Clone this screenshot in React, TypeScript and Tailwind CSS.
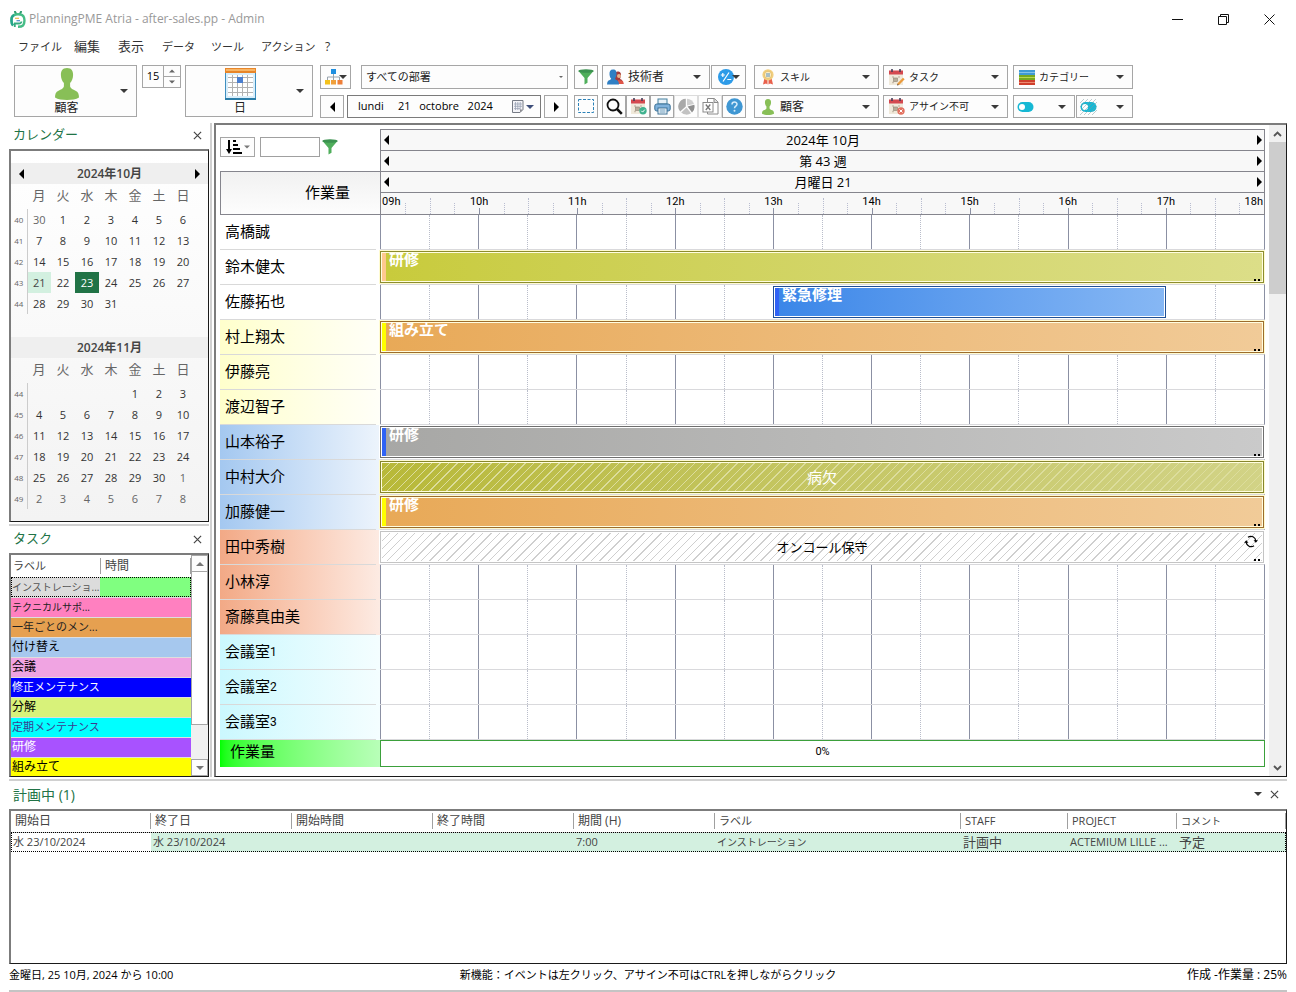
import React from "react";
import type { ReactNode } from "react";

/* ---------- small glyphs ---------- */

function Caret({ className = "w-2 text-[#3a3a3a]" }: { className?: string }) {
  return (
    <svg viewBox="0 0 8 4" className={`h-1 shrink-0 ${className}`} fill="currentColor" aria-hidden="true">
      <path d="M0 0h8L4 4z" />
    </svg>
  );
}

function Arrow({ dir }: { dir: "left" | "right" }) {
  return (
    <svg viewBox="0 0 5 10" width="5" height="10" aria-hidden="true">
      <path d={dir === "left" ? "M5 0v10L0 5z" : "M0 0v10l5-5z"} fill="#000" />
    </svg>
  );
}

function CloseIcon() {
  return (
    <svg viewBox="0 0 10 10" width="9" height="9" aria-hidden="true">
      <path d="M1 1l8 8M9 1L1 9" stroke="#444" strokeWidth="1.3" />
    </svg>
  );
}

function LogoIcon() {
  return (
    <svg viewBox="0 0 16 17" width="16" height="17" aria-hidden="true">
      <path d="M5 .8l1 2M11 .8l-1 2" stroke="#2f9b6f" strokeWidth="2" strokeLinecap="round" />
      <path d="M3 14.500Q.8 12 1.800 6.500 3 3.200 8 3.200t6 3.300q1.300 5-1 8-1.500 1.300-5 1.300" stroke="#46bd86" strokeWidth="2.400" fill="none" />
      <path d="M3 14.500Q.8 12 1.800 6.500 2.300 5 4 4" stroke="#27a58c" strokeWidth="2.400" fill="none" />
      <path d="M4.800 16V12.500h4q2.500 0 2.700-2" stroke="#35ad80" strokeWidth="1.800" fill="none" />
      <path d="M5 7.300h4" stroke="#e8b84a" strokeWidth="1.200" />
      <path d="M6.500 9.700h3.500" stroke="#4f86c9" strokeWidth="1.200" />
    </svg>
  );
}

function PersonIcon({ className }: { className: string }) {
  return (
    <svg viewBox="0 0 24 32" className={className} fill="#88bf57" aria-hidden="true">
      <path d="M12 0C7.500 0 5.800 2.800 5.900 7c.1 3.500 1.200 6 3 8v3.500C8.500 20.500 6 21.500 3.500 22.700.8 24 0 26 0 29.500 3 31.300 7 32 12 32s9-.7 12-2.500c0-3.500-.8-5.500-3.500-6.800-2.500-1.200-5-2.200-5.400-4.200V15c1.800-2 2.900-4.500 3-8C18.200 2.800 16.500 0 12 0z" />
    </svg>
  );
}

function CalendarBigIcon() {
  return (
    <svg viewBox="0 0 31 32" width="31" height="32" aria-hidden="true">
      <rect x="0.500" y="0.500" width="30" height="30.500" rx="1" fill="#d9eefb" stroke="#3f8fc0" />
      <rect x="0" y="0" width="31" height="5" fill="#e8862a" />
      <rect x="1" y="1" width="29" height="2" fill="#f7b566" />
      <rect x="3" y="7" width="25" height="21" fill="#fff" />
      <path d="M7.500 7v21M12.500 7v21M17.500 7v21M22.500 7v21M3 9.500h25M3 14.500h25M3 19.500h25M3 24.500h25" stroke="#b2b2b2" />
      <rect x="12" y="9" width="6" height="6" fill="#4a7fd0" />
      <path d="M0 31h31" stroke="#2b7da8" strokeWidth="2" />
    </svg>
  );
}

function OrgIcon() {
  return (
    <svg viewBox="0 0 18 16" width="18" height="16" aria-hidden="true">
      <path d="M8.500 4v7M2.500 11V8h12v3" stroke="#9aa4ae" fill="none" />
      <rect x="6" y="0" width="5" height="5" fill="#1f8fe0" />
      <rect x="0" y="11" width="5" height="4.500" fill="#f3c11b" />
      <rect x="6" y="11" width="5" height="4.500" fill="#f0a03a" />
      <rect x="12.500" y="11" width="5" height="4.500" fill="#ee7f38" />
    </svg>
  );
}

function FunnelIcon() {
  return (
    <svg viewBox="0 0 16 16" width="16" height="16" aria-hidden="true">
      <path d="M0.500 2L6.500 9v6.500l3-1.800V9l6-7z" fill="#4fae5b" />
      <ellipse cx="8" cy="2" rx="7.700" ry="1.800" fill="#3c9250" />
    </svg>
  );
}

function TechIcon() {
  return (
    <svg viewBox="0 0 17 16" width="17" height="16" aria-hidden="true">
      <path d="M8 4q1-2 3.500-1.500Q14.500 3 14 7l-1 3q3 .8 3.500 5H8z" fill="#a83a3a" />
      <path d="M10 15l1-4 5 1 .5 3z" fill="#df5548" />
      <circle cx="12" cy="7" r="2" fill="#e8b48c" />
      <path d="M6 0.500c3 0 3.800 2 3.500 5C9.300 7.500 8.600 9 8 9.600q.5 1.400 2.500 2Q12 12.500 12 15.500H0q0-3 1.500-3.900Q4 11 4.200 9.600C3.200 8.800 2.700 7.500 2.500 5.500 2.300 2.500 3.200.5 6 .5z" fill="#2f7fc4" />
    </svg>
  );
}

function PlusMinusIcon() {
  return (
    <svg viewBox="0 0 16 16" width="16" height="16" aria-hidden="true">
      <circle cx="8" cy="8" r="8" fill="#2d9be8" />
      <path d="M11 3.500l-6 9M2.800 6h4M4.800 4v4M9.300 10.500h4" stroke="#fff" strokeWidth="1.200" />
    </svg>
  );
}

function DropCalendarIcon() {
  return (
    <svg viewBox="0 0 12 13" width="12" height="13" aria-hidden="true">
      <path d="M.5.500h10.500v9l-3 3H.5z" fill="#f4f4f8" stroke="#777c86" />
      <path d="M3.500 2v8M5.800 2v8M8.200 2v8M2 4h8M2 6.300h8M2 8.600h6" stroke="#9ba3b5" strokeWidth=".8" />
      <path d="M11 9.500H8v3z" fill="#8b8b91" />
    </svg>
  );
}

function SelectionIcon() {
  return (
    <svg viewBox="0 0 17 15" width="17" height="15" aria-hidden="true">
      <rect x="0.500" y="0.500" width="15" height="13" fill="none" stroke="#2c82b8" strokeDasharray="3 1.500" />
    </svg>
  );
}

function SearchIcon() {
  return (
    <svg viewBox="0 0 17 17" width="17" height="17" aria-hidden="true">
      <circle cx="7" cy="7" r="5.500" fill="#fff" stroke="#111" strokeWidth="1.800" />
      <path d="M11 11l4.800 4.800" stroke="#111" strokeWidth="2.500" />
    </svg>
  );
}

function EventIcon({ badge }: { badge: "check" | "pencil" | "cross" }) {
  return (
    <svg viewBox="0 0 17 17" width="17" height="17" aria-hidden="true">
      <rect x="1" y="4" width="14" height="12" fill="#f0e9da" />
      <rect x="1" y="1.500" width="14" height="4" fill="#d4494f" />
      <path d="M4 0v3M12 0v3" stroke="#463f58" strokeWidth="1.600" />
      <path d="M4 8h2M10 8h2M4 13.500h2" stroke="#cbbfae" strokeWidth="1.500" />
      <rect x="5.500" y="9" width="4" height="3.500" fill="#b8ae9a" stroke="#8e8474" strokeWidth=".6" />
      {badge === "check" && (
        <g>
          <circle cx="13" cy="12.800" r="3.700" fill="#3fb28f" />
          <path d="M11.300 12.800l1.300 1.300 2.200-2.500" stroke="#fff" fill="none" />
        </g>
      )}
      {badge === "pencil" && (
        <g>
          <path d="M10 15.500l5.800-6" stroke="#ea9a3c" strokeWidth="2.400" />
          <path d="M9 16.500l1.800-.6-1.200-1.200z" fill="#553c2c" />
        </g>
      )}
      {badge === "cross" && (
        <g>
          <circle cx="13" cy="13" r="3.700" fill="#e2705f" />
          <path d="M11.500 11.500l3 3M14.500 11.500l-3 3" stroke="#fff" />
        </g>
      )}
    </svg>
  );
}

function PrinterIcon() {
  return (
    <svg viewBox="0 0 17 17" width="17" height="17" aria-hidden="true">
      <rect x="4" y="1" width="9" height="5" fill="#e7f1f8" stroke="#44809f" />
      <rect x="0.800" y="6" width="15.400" height="7" rx="2" fill="#7fb2dc" stroke="#3a7096" />
      <rect x="4" y="10" width="9" height="6" fill="#fff" stroke="#3a7096" />
      <path d="M5.500 12h6M5.500 14h6" stroke="#5d93b8" />
    </svg>
  );
}

function PieIcon() {
  return (
    <svg viewBox="0 0 17 17" width="17" height="17" aria-hidden="true">
      <path d="M7.800 8.500V.8A7.700 7.700 0 0 0 2.200 13.600z" fill="#a9a9a9" />
      <path d="M9 7.500V.8a7.700 7.700 0 0 1 7 5.200z" fill="#cfcfcf" />
      <path d="M9.600 8.600l6.700-1.800a7.700 7.700 0 0 1-2.300 7.600z" fill="#8f8f8f" />
      <path d="M8.500 9.500l4.500 5.700a7.700 7.700 0 0 1-9.800-.7z" fill="#c2c2c2" />
    </svg>
  );
}

function ExcelIcon() {
  return (
    <svg viewBox="0 0 17 17" width="17" height="17" aria-hidden="true">
      <path d="M5.500 4.500v-4h7l3.500 3.500v12H5.500v-2" fill="#fff" stroke="#8a8a8a" />
      <path d="M12 .5v4h4" fill="#ddd" stroke="#8a8a8a" />
      <rect x="1" y="4.500" width="10" height="9.500" fill="#fff" stroke="#8a8a8a" />
      <path d="M3.800 6.500l4.500 5.500M8.300 6.500L3.800 12" stroke="#777" strokeWidth="1.300" />
    </svg>
  );
}

function HelpIcon() {
  return (
    <svg viewBox="0 0 17 17" width="17" height="17" aria-hidden="true">
      <circle cx="8.500" cy="8.500" r="8.200" fill="#3f97d3" />
      <path d="M6 6.500C6 3.200 11 3.300 11 6.200c0 1.900-2.500 1.800-2.500 4" stroke="#d5ecfb" strokeWidth="1.500" fill="none" />
      <circle cx="8.500" cy="12.700" r="1" fill="#d5ecfb" />
    </svg>
  );
}

function MedalIcon() {
  return (
    <svg viewBox="0 0 14 16" width="14" height="16" aria-hidden="true">
      <path d="M3.500 9L2 15.500l3-1 1.500 1V10zM10.500 9l1.500 6.500-3-1-1.500 1V10z" fill="#e8604c" />
      <circle cx="7" cy="5.800" r="5.600" fill="#f2cf7e" />
      <circle cx="7" cy="5.800" r="3.600" fill="#fbeec6" stroke="#d9ac50" strokeWidth=".6" />
      <path d="M5 5h4M5 7h4" stroke="#5a8fc0" strokeWidth="1.200" />
    </svg>
  );
}

function CategoryIcon() {
  return (
    <svg viewBox="0 0 16 15" width="16" height="15" aria-hidden="true">
      <rect width="16" height="5" y="0" fill="#3f9ad4" />
      <rect width="16" height="1" y="2" fill="#83c3ea" />
      <rect width="16" height="5" y="5" fill="#76a821" />
      <rect width="16" height="1" y="7" fill="#b8d94b" />
      <rect width="16" height="5" y="10" fill="#cf3f2c" />
      <rect width="16" height="1" y="12" fill="#ec8a72" />
    </svg>
  );
}

function ToggleIcon({ hatched = false }: { hatched?: boolean }) {
  return (
    <svg viewBox="0 0 17 16" width="17" height="16" aria-hidden="true">
      <rect x="0.500" y="3" width="16" height="10" rx="5" fill="#16b8d4" />
      <circle cx="5" cy="8" r="3" fill="#fff" />
      {hatched && (
        <path
          d="M0 4L4 0M0 8L8 0M0 12L12 0M0 16L16 0M4 16L17 3M8 16l9-9M12 16l5-5"
          stroke="#7d9ba0"
          strokeWidth=".5"
        />
      )}
    </svg>
  );
}

function SortIcon() {
  return (
    <svg viewBox="0 0 16 14" width="16" height="14" aria-hidden="true">
      <path d="M3 0v11" stroke="#000" strokeWidth="2" />
      <path d="M0 9h6l-3 5z" />
      <path d="M7 1h3M7 5h5M7 9h7M7 13h9" stroke="#000" strokeWidth="2" />
    </svg>
  );
}

function RepeatIcon() {
  return (
    <svg viewBox="0 0 14 13" width="14" height="13" aria-hidden="true">
      <path d="M11.800 6A4.900 4.900 0 0 0 4 2.300M2.200 7A4.900 4.900 0 0 0 10 10.700" stroke="#000" strokeWidth="1.200" fill="none" />
      <path d="M9.500 5.200h4.500l-2.200 2.600zM0 7.800h4.500L2.300 5.200z" />
    </svg>
  );
}

/* ---------- toolbar ---------- */

const BOX = "border border-[#a6a6a6] bg-[#fdfdfd]";

function IconButton({ label, children, className = "w-6", muted = false }: { label: string; children: ReactNode; className?: string; muted?: boolean }) {
  return (
    <button
      type="button"
      aria-label={label}
      className={`flex shrink-0 items-center justify-center border bg-[#fdfdfd] ${muted ? "border-[#dcdcdc]" : "border-[#a6a6a6]"} ${className}`}
    >
      {children}
    </button>
  );
}

function Combo({ label, icon, text, className = "", flat = false }: { label: string; icon?: ReactNode; text: string; className?: string; flat?: boolean }) {
  return (
    <div className={`flex items-center gap-1 pl-1 ${BOX} ${flat ? "pr-1" : "pr-2"} ${className}`}>
      {icon && <span className="flex w-[17px] shrink-0 justify-center">{icon}</span>}
      <select aria-label={label} className="min-w-0 flex-1 appearance-none truncate bg-transparent text-[#222] outline-none">
        <option>{text}</option>
      </select>
      <Caret className={flat ? "w-1 text-[#666]" : "w-2 text-[#3a3a3a]"} />
    </div>
  );
}

function BigButton({ icon, text, className }: { icon: ReactNode; text: string; className: string }) {
  return (
    <button type="button" className={`flex h-[52px] shrink-0 items-center pr-2 ${BOX} ${className}`}>
      <span className="flex flex-1 flex-col items-center pt-0.5 pr-0.5 text-[12px] leading-4 text-[#222]">
        {icon}
        <span>{text}</span>
      </span>
      <Caret />
    </button>
  );
}

function Toolbar() {
  return (
    <div className="flex items-start pl-[14px]">
      <BigButton text="顧客" className="w-[123px]" icon={<PersonIcon className="h-8 w-6" />} />
      <div className={`mr-1 ml-[5px] flex h-[23px] w-[39px] shrink-0 ${BOX}`}>
        <input aria-label="間隔" defaultValue="15" className="w-5 min-w-0 text-center text-[11px] text-black outline-none" />
        <div className="flex flex-1 flex-col border-l border-[#a6a6a6]">
          <button type="button" aria-label="増やす" className="flex flex-1 items-center justify-center border-b border-[#a6a6a6]">
            <span className="rotate-180"><Caret className="w-1.5 text-[#666]" /></span>
          </button>
          <button type="button" aria-label="減らす" className="flex flex-1 items-center justify-center">
            <Caret className="w-1.5 text-[#666]" />
          </button>
        </div>
      </div>
      <BigButton text="日" className="w-[128px]" icon={<CalendarBigIcon />} />

      <div className="ml-[7px] flex w-[248px] shrink-0 flex-col gap-[6px]">
        <div className="flex h-6 gap-[10px]">
          <IconButton label="組織" className="w-[31px]">
            <OrgIcon />
            <Caret className="-ml-1 w-2 text-[#3a3a3a]" />
          </IconButton>
          <Combo label="部署" text="すべての部署" flat className="flex-1 text-[11px]" />
        </div>
        <div className="flex h-[23px] gap-[3px]">
          <IconButton label="前の日"><Arrow dir="left" /></IconButton>
          <div className="flex min-w-0 flex-1 items-center border border-[#7a7a7a] bg-[#fdfdfd] pr-1.5 pl-[10px]">
            <input
              aria-label="日付"
              defaultValue={"lundi     21   octobre   2024"}
              className="min-w-0 flex-1 text-[11px] text-black outline-none"
            />
            <button type="button" aria-label="日付を選択" className="flex items-center gap-0.5">
              <DropCalendarIcon />
              <Caret className="w-2 text-[#3f4f7a]" />
            </button>
          </div>
          <IconButton label="次の日"><Arrow dir="right" /></IconButton>
        </div>
      </div>

      <div className="ml-[6px] flex w-[172px] shrink-0 flex-col gap-[6px]">
        <div className="flex h-6">
          <IconButton label="フィルター"><FunnelIcon /></IconButton>
          <Combo label="リソース" text="技術者" icon={<TechIcon />} className="mr-px ml-1 flex-1 text-[12px]" />
          <IconButton label="計算" className="w-[35px]">
            <PlusMinusIcon />
            <Caret className="-ml-0.5 w-2 text-[#3a3a3a]" />
          </IconButton>
        </div>
        <div className="flex h-[23px]">
          <IconButton label="選択" className="mr-1 w-6"><SelectionIcon /></IconButton>
          <IconButton label="検索"><SearchIcon /></IconButton>
          <IconButton label="予定"><EventIcon badge="check" /></IconButton>
          <IconButton label="印刷"><PrinterIcon /></IconButton>
          <IconButton label="統計" muted><PieIcon /></IconButton>
          <IconButton label="エクスポート" muted><ExcelIcon /></IconButton>
          <IconButton label="ヘルプ"><HelpIcon /></IconButton>
        </div>
      </div>

      <div className="ml-2 flex w-[125px] shrink-0 flex-col gap-[6px]">
        <Combo label="スキル" text="スキル" icon={<MedalIcon />} className="h-6 text-[10px]" />
        <Combo label="顧客" text="顧客" icon={<PersonIcon className="h-4 w-3" />} className="h-[23px] text-[12px]" />
      </div>
      <div className="ml-1 flex w-[125px] shrink-0 flex-col gap-[6px]">
        <Combo label="タスク" text="タスク" icon={<EventIcon badge="pencil" />} className="h-6 text-[10px]" />
        <Combo label="アサイン不可" text="アサイン不可" icon={<EventIcon badge="cross" />} className="h-[23px] text-[10px]" />
      </div>
      <div className="ml-[5px] flex w-[120px] shrink-0 flex-col gap-[6px]">
        <Combo label="カテゴリー" text="カテゴリー" icon={<CategoryIcon />} className="h-6 text-[10px]" />
        <div className="flex h-[23px] gap-px">
          <button type="button" aria-label="表示切替" className={`flex w-[62px] items-center justify-between pr-2 pl-[3px] ${BOX}`}>
            <ToggleIcon />
            <Caret />
          </button>
          <button type="button" aria-label="アサイン不可の表示切替" className={`flex flex-1 items-center justify-between pr-2 pl-[3px] ${BOX}`}>
            <ToggleIcon hatched />
            <Caret />
          </button>
        </div>
      </div>
    </div>
  );
}

/* ---------- left dock ---------- */

const PANEL = "border-t-2 border-l-2 border-r border-b border-t-[#7c7c7c] border-l-[#7c7c7c] border-r-[#1a1a1a] border-b-[#1a1a1a]";

function PanelTitle({ title, size }: { title: string; size: string }) {
  return (
    <div className="flex h-[26px] items-center justify-between pr-[7px] pb-0.5 pl-1">
      <h2 className={`text-[#217346] ${size}`}>{title}</h2>
      <button type="button" aria-label={`${title}を閉じる`}><CloseIcon /></button>
    </div>
  );
}

type Month = { title: string; weeks: [number, (number | null)[]][]; nav?: boolean; outside: (week: number, day: number) => boolean };

const MONTHS: Month[] = [
  {
    title: "2024年10月",
    nav: true,
    outside: (w, d) => w === 40 && d === 30,
    weeks: [
      [40, [30, 1, 2, 3, 4, 5, 6]],
      [41, [7, 8, 9, 10, 11, 12, 13]],
      [42, [14, 15, 16, 17, 18, 19, 20]],
      [43, [21, 22, 23, 24, 25, 26, 27]],
      [44, [28, 29, 30, 31, null, null, null]],
    ],
  },
  {
    title: "2024年11月",
    outside: (w, d) => w === 49 || (w === 48 && d === 1),
    weeks: [
      [44, [null, null, null, null, 1, 2, 3]],
      [45, [4, 5, 6, 7, 8, 9, 10]],
      [46, [11, 12, 13, 14, 15, 16, 17]],
      [47, [18, 19, 20, 21, 22, 23, 24]],
      [48, [25, 26, 27, 28, 29, 30, 1]],
      [49, [2, 3, 4, 5, 6, 7, 8]],
    ],
  },
];

function dayTone(month: Month, week: number, day: number | null) {
  if (month.nav && day === 23) return "bg-[#217346] text-white";
  if (month.nav && day === 21) return "bg-[#d3f0e0] text-[#444]";
  if (day !== null && month.outside(week, day)) return "text-[#666]";
  return "text-[#333]";
}

function MonthView({ month }: { month: Month }) {
  return (
    <div className="min-h-[174px]">
      <div className="flex h-[21px] items-center justify-between bg-[#efefef] px-2">
        {month.nav ? <button type="button" aria-label="前の月"><Arrow dir="left" /></button> : <span />}
        <span className="text-[12px] font-semibold text-[#444]">{month.title}</span>
        {month.nav ? <button type="button" aria-label="次の月"><Arrow dir="right" /></button> : <span />}
      </div>
      <table className="table-fixed border-collapse text-center">
        <thead>
          <tr className="h-[25px] text-[13px] text-[#666]">
            <th className="w-4" aria-label="週" />
            {["月", "火", "水", "木", "金", "土", "日"].map((d) => (
              <th key={d} className="w-6 p-0 pb-1 leading-4 font-normal">{d}</th>
            ))}
          </tr>
        </thead>
        <tbody>
          {month.weeks.map(([week, days]) => (
            <tr key={week} className="h-[21px]">
              <th className="border-r border-[#ccc] p-0 text-[8px] leading-3 font-normal text-[#666]">{week}</th>
              {days.map((day, i) => (
                <td key={i} className={`p-0 text-[11px] leading-4 ${dayTone(month, week, day)}`}>{day}</td>
              ))}
            </tr>
          ))}
        </tbody>
      </table>
    </div>
  );
}

const TASKS = [
  { label: "インストレーショ...", tone: "bg-[#80ff80] text-[#555] text-[10px]" },
  { label: "テクニカルサポ...", tone: "bg-[#ff80c0] text-[#222] text-[10px]" },
  { label: "一年ごとのメン...", tone: "bg-[#e6a050] text-[#222] text-[11px]" },
  { label: "付け替え", tone: "bg-[#a6c8ee] text-black text-[12px]" },
  { label: "会議", tone: "bg-[#f0a4e2] text-black text-[12px]" },
  { label: "修正メンテナンス", tone: "bg-[#0000ff] text-white text-[11px]" },
  { label: "分解", tone: "bg-[#d8f27a] text-black text-[12px]" },
  { label: "定期メンテナンス", tone: "bg-[#00ffff] text-[#3b3b8f] text-[11px]" },
  { label: "研修", tone: "bg-[#a852ff] text-white text-[12px]" },
  { label: "組み立て", tone: "bg-[#ffff00] text-black text-[12px]" },
];

function TaskList() {
  return (
    <div className={`flex h-[224px] overflow-hidden ${PANEL}`}>
      <table className="flex-1 table-fixed border-collapse">
        <thead>
          <tr className="h-[22px] text-left text-[#444]">
            <th className="w-[89px] p-0 pl-0.5 text-[11px] leading-4 font-normal">ラベル</th>
            <th className="p-0 font-normal">
              <div className="border-x border-[#a0a0a0] pl-1 text-[12px] leading-4">時間</div>
            </th>
          </tr>
        </thead>
        <tbody>
          {TASKS.map((task, i) => (
            <tr key={task.label} className={`h-5 border-b border-[#dedede] ${task.tone} ${i === 0 ? "outline-1 -outline-offset-1 outline-black outline-dotted" : ""}`}>
              <td className={`overflow-hidden p-0 pl-px leading-4 whitespace-nowrap ${i === 0 ? "bg-[#dcdcdc]" : ""}`}>{task.label}</td>
              <td className="p-0" />
            </tr>
          ))}
        </tbody>
      </table>
      <div className="flex w-[17px] shrink-0 flex-col bg-[#f0f0f0]">
        <button type="button" aria-label="上へ" className="flex h-[17px] items-center justify-center border border-[#a6a6a6] bg-[#fdfdfd]">
          <span className="rotate-180"><Caret className="w-2 text-[#777]" /></span>
        </button>
        <div className="mb-[34px] flex-1 border-x border-b border-[#a6a6a6] bg-white" />
        <button type="button" aria-label="下へ" className="flex h-[17px] items-center justify-center border border-[#a6a6a6] bg-[#fdfdfd]">
          <Caret className="w-2 text-[#777]" />
        </button>
      </div>
    </div>
  );
}

function LeftDock() {
  return (
    <aside className="flex w-[200px] shrink-0 flex-col">
      <PanelTitle title="カレンダー" size="text-[13px]" />
      <div className={`bg-linear-to-b from-white to-[#f3f3f3] pt-3 pb-[10px] ${PANEL}`}>
        {MONTHS.map((m) => <MonthView key={m.title} month={m} />)}
      </div>
      <div className="mt-0.5 h-0.5 bg-[#d0d0d0]" />
      <div className="mt-px">
        <PanelTitle title="タスク" size="text-[13px]" />
      </div>
      <TaskList />
    </aside>
  );
}

/* ---------- planner ---------- */

type Bar = {
  start: number;
  end: number;
  text: string;
  fill: string;
  frame: string;
  tag?: string;
  centred?: string;
  hatch?: string;
  dots?: boolean;
  repeat?: boolean;
};

type Resource = { name: string; suffix?: string; tone: string; bar?: Bar };

const WHITE = "bg-white";
const YELLOW = "bg-linear-to-r from-[#ffffcc] to-[#fffff8]";
const BLUE = "bg-linear-to-r from-[#a4c8f0] to-[#edf4fc]";
const SALMON = "bg-linear-to-r from-[#f2a986] to-[#fdebe3]";
const CYAN = "bg-linear-to-r from-[#cbf8fe] to-[#f4feff]";

const CREAM = "bg-[#fffde0] outline-[#fffbd0]";
const PLAIN = "bg-white outline-white";

const RESOURCES: Resource[] = [
  { name: "高橋誠", tone: WHITE },
  { name: "鈴木健太", tone: WHITE, bar: { start: 9, end: 18, text: "研修", fill: "from-[#c8cb3b] to-[#dcde88]", frame: `border-[#8c8c2e] ${CREAM}`, tag: "bg-[#ffc98f]", dots: true } },
  { name: "佐藤拓也", tone: WHITE, bar: { start: 13, end: 17, text: "緊急修理", fill: "from-[#3a86e8] to-[#86b7f4]", frame: `border-[#1f4f94] ${PLAIN}`, tag: "bg-[#2f62f5]" } },
  { name: "村上翔太", tone: YELLOW, bar: { start: 9, end: 18, text: "組み立て", fill: "from-[#e8a957] to-[#f1cb98]", frame: `border-[#9c6c2c] ${CREAM}`, tag: "bg-[#ffff00]", dots: true } },
  { name: "伊藤亮", tone: YELLOW },
  { name: "渡辺智子", tone: YELLOW },
  { name: "山本裕子", tone: BLUE, bar: { start: 9, end: 18, text: "研修", fill: "from-[#a7a7a5] to-[#cacaca]", frame: `border-[#6e6e6e] ${PLAIN}`, tag: "bg-[#2f62f5]", dots: true } },
  { name: "中村大介", tone: BLUE, bar: { start: 9, end: 18, text: "病欠", fill: "from-[#b8b938] to-[#d2d386]", frame: `border-[#86862c] ${CREAM}`, centred: "text-[15px] text-white", hatch: "bg-[repeating-linear-gradient(135deg,transparent_0_5px,#dcdd9c_5px_6px)]" } },
  { name: "加藤健一", tone: BLUE, bar: { start: 9, end: 18, text: "研修", fill: "from-[#e8a957] to-[#f1cb98]", frame: `border-[#9c6c2c] ${CREAM}`, tag: "bg-[#ffff00]", dots: true } },
  { name: "田中秀樹", tone: SALMON, bar: { start: 9, end: 18, text: "オンコール保守", fill: "from-white to-white", frame: `border-[#c4c4c4] ${PLAIN}`, centred: "text-[13px] text-black", hatch: "bg-[repeating-linear-gradient(135deg,transparent_0_5px,#cfcfcf_5px_6px)]", dots: true, repeat: true } },
  { name: "小林淳", tone: SALMON },
  { name: "斎藤真由美", tone: SALMON },
  { name: "会議室", suffix: "1", tone: CYAN },
  { name: "会議室", suffix: "2", tone: CYAN },
  { name: "会議室", suffix: "3", tone: CYAN },
];

const DAY_START = 9;
const DAY_END = 18;
const HOURS = [9, 10, 11, 12, 13, 14, 15, 16, 17];
const pct = (hours: number) => `${(hours / (DAY_END - DAY_START)) * 100}%`;

function EventBar({ bar }: { bar: Bar }) {
  return (
    <div
      className={`absolute top-px flex h-8 border p-px outline-1 ${bar.frame}`}
      style={{ left: pct(bar.start - DAY_START), width: pct(bar.end - bar.start) }}
    >
      <div className={`relative flex flex-1 bg-linear-to-r ${bar.fill}`}>
        {bar.hatch && <div className={`absolute inset-0 ${bar.hatch}`} />}
        {bar.tag && <span className={`w-1 shrink-0 ${bar.tag}`} />}
        {bar.centred ? (
          <span className={`relative flex flex-1 items-center justify-center leading-4 ${bar.centred}`}>{bar.text}</span>
        ) : (
          <span className="pl-[3px] text-[15px] leading-3 font-bold text-white">{bar.text}</span>
        )}
        {bar.repeat && <span className="absolute top-0.5 right-1"><RepeatIcon /></span>}
        {bar.dots && (
          <span className="absolute right-0.5 bottom-0 flex gap-0.5">
            <i className="size-0.5 bg-black" />
            <i className="size-0.5 bg-black" />
          </span>
        )}
      </div>
    </div>
  );
}

function ResourceRow({ resource }: { resource: Resource }) {
  return (
    <div className="flex h-[35px]">
      <div className={`w-40 shrink-0 pr-1 ${resource.tone}`}>
        <div className="flex h-full items-center border-b border-[#d9d9d9] pb-px pl-[5px] text-[15px] text-black">
          {resource.name}
          {resource.suffix && <span className="font-[Roboto] text-[12px]">{resource.suffix}</span>}
        </div>
      </div>
      <div className="relative grid flex-1 grid-cols-9 border-r border-b border-r-[#8b90a3] border-b-[#d9d9dc]">
        {HOURS.map((h) => (
          <div key={h} className="flex border-l border-[#8b90a3]">
            <div className="flex-1" />
            <div className="flex-1 border-l border-dotted border-[#b9bdca]" />
          </div>
        ))}
        {resource.bar && <EventBar bar={resource.bar} />}
      </div>
    </div>
  );
}

function BandRow({ text }: { text: string }) {
  return (
    <div className="flex h-[21px] items-center justify-between border-b border-[#85858d] pr-0.5 pb-px pl-[3px]">
      <button type="button" aria-label={`前: ${text}`}><Arrow dir="left" /></button>
      <span className="text-[13px] leading-4 text-black">{text}</span>
      <button type="button" aria-label={`次: ${text}`}><Arrow dir="right" /></button>
    </div>
  );
}

function HourScale() {
  return (
    <div className="relative grid h-[21px] grid-cols-9 font-[Roboto] text-[11px] leading-4 text-black">
      {HOURS.map((h, i) => (
        <div key={h} className="relative">
          <span className={`absolute top-px ${i === 0 ? "left-px" : "left-0 -translate-x-1/2"}`}>{String(h).padStart(2, "0")}h</span>
          <div className="flex h-full items-end">
            <span className={`h-1.5 flex-1 ${i === 0 ? "" : "border-l border-[#8b90a3]"}`} />
            <span className="h-[11px] flex-1 border-l border-dotted border-[#b9bdd0]" />
            <span className="h-4 flex-1 border-l border-dotted border-[#b9bdd0]" />
            <span className="h-[11px] flex-1 border-l border-dotted border-[#b9bdd0]" />
          </div>
        </div>
      ))}
      <span className="absolute top-px right-px">18h</span>
    </div>
  );
}

function Planner() {
  return (
    <main className={`flex min-w-0 flex-1 ${PANEL}`}>
      <div className="flex min-w-0 flex-1 flex-col pt-1 pr-1 pl-1">
        <div className="flex">
          <div className="flex w-40 shrink-0 flex-col justify-between pt-2">
            <div className="flex h-5 items-center">
              <button type="button" aria-label="並べ替え" className={`flex h-5 w-[35px] items-center justify-center gap-0.5 ${BOX}`}>
                <SortIcon />
                <Caret className="w-1.5 text-[#777]" />
              </button>
              <input aria-label="リソース検索" className="mr-0.5 ml-[5px] h-5 w-[60px] border border-[#a0a0a0] bg-white px-1 text-[11px]" />
              <button type="button" aria-label="リソースを絞り込む"><FunnelIcon /></button>
            </div>
            <div className="flex h-11 items-center justify-end border-y border-l border-[#85858d] bg-linear-to-b from-[#f1f1f1] to-[#fdfdfd] pr-[30px] pb-px text-[15px] text-black">
              作業量
            </div>
          </div>
          <div className="min-w-0 flex-1 border border-[#85858d] bg-[#f8f8f8]">
            <BandRow text="2024年 10月" />
            <BandRow text="第 43 週" />
            <BandRow text="月曜日 21" />
            <HourScale />
          </div>
        </div>
        {RESOURCES.map((r) => <ResourceRow key={r.name + (r.suffix ?? "")} resource={r} />)}
        <div className="mb-[9px] flex h-[27px]">
          <div className="flex w-40 shrink-0 items-center bg-linear-to-r from-[#00ff00] to-[#b8ffb8] pb-1 pl-[10px] text-[15px] text-black">作業量</div>
          <div className="flex flex-1 items-center justify-center border border-[#3ba03b] bg-white pb-0.5 font-[Roboto] text-[11px] text-black">0%</div>
        </div>
      </div>
      <div className="flex w-[17px] shrink-0 flex-col items-center bg-[#f0f0f0]">
        <button type="button" aria-label="上へスクロール" className="flex h-[17px] items-center">
          <svg viewBox="0 0 9 6" width="9" height="6" aria-hidden="true"><path d="M1 5l3.500-3.500L8 5" stroke="#555" strokeWidth="1.800" fill="none" /></svg>
        </button>
        <div className="h-[152px] w-full bg-[#cdcdcd]" />
        <div className="flex-1" />
        <button type="button" aria-label="下へスクロール" className="flex h-[17px] items-center">
          <svg viewBox="0 0 9 6" width="9" height="6" aria-hidden="true"><path d="M1 1l3.500 3.500L8 1" stroke="#555" strokeWidth="1.800" fill="none" /></svg>
        </button>
      </div>
    </main>
  );
}

/* ---------- bottom dock ---------- */

const COLUMNS = [
  { title: "開始日", width: "w-[140px]", size: "text-[12px]", value: "水 23/10/2024" },
  { title: "終了日", width: "w-[141px]", size: "text-[12px]", value: "水 23/10/2024" },
  { title: "開始時間", width: "w-[141px]", size: "text-[12px]", value: "" },
  { title: "終了時間", width: "w-[141px]", size: "text-[12px]", value: "" },
  { title: "期間 (H)", width: "w-[141px]", size: "text-[12px]", value: "7:00" },
  { title: "ラベル", width: "", size: "text-[11px]", value: "インストレーション" },
  { title: "STAFF", width: "w-[107px]", size: "text-[11px]", value: "計画中" },
  { title: "PROJECT", width: "w-[109px]", size: "text-[11px]", value: "ACTEMIUM LILLE ..." },
  { title: "コメント", width: "w-[109px]", size: "text-[10px]", value: "予定" },
];

function valueSize(value: string) {
  if (value.startsWith("イ")) return "text-[10px]";
  return /^[計予]/.test(value) ? "text-[13px]" : "text-[11px]";
}

function PlannedDock() {
  return (
    <section className="flex flex-1 flex-col px-[9px]">
      <div className="mt-0.5 h-0.5 bg-[#d0d0d0]" />
      <div className="flex h-7 items-center justify-between pr-2 pb-0.5 pl-1">
        <h2 className="text-[14px] text-[#217346]">計画中 (1)</h2>
        <div className="flex items-center gap-2">
          <button type="button" aria-label="メニュー" className="flex"><Caret /></button>
          <button type="button" aria-label="計画中を閉じる"><CloseIcon /></button>
        </div>
      </div>
      <div className={`flex-1 ${PANEL}`}>
        <table className="w-full table-fixed border-collapse">
          <thead>
            <tr className="h-[21px] border-b border-[#c8c8c8] text-left text-[#444]">
              {COLUMNS.map((c) => (
                <th key={c.title} className={`p-0 font-normal ${c.width}`}>
                  <div className={`border-r border-[#a0a0a0] pl-1 leading-4 ${c.size}`}>{c.title}</div>
                </th>
              ))}
            </tr>
          </thead>
          <tbody>
            <tr className="h-5 bg-[#d3f0e0] text-[#444] outline-1 -outline-offset-1 outline-black outline-dotted">
              {COLUMNS.map((c, i) => (
                <td key={c.title} className={`overflow-hidden p-0 pb-px pl-0.5 leading-4 whitespace-nowrap ${valueSize(c.value)} ${i === 0 ? "bg-white" : ""}`}>
                  {c.value}
                </td>
              ))}
            </tr>
          </tbody>
        </table>
      </div>
    </section>
  );
}

/* ---------- window ---------- */

const MENUS = [
  { text: "ファイル", size: "text-[11px]" },
  { text: "編集", size: "text-[13px]" },
  { text: "表示", size: "text-[13px]" },
  { text: "データ", size: "text-[11px]" },
  { text: "ツール", size: "text-[11px]" },
  { text: "アクション", size: "text-[11px]" },
  { text: "?", size: "text-[12px]" },
];

export default function App() {
  return (
    <div className="flex min-h-screen flex-col bg-white font-['Open_Sans','Noto_Sans_CJK_JP',sans-serif]">
      <header className="flex h-9 items-center justify-between pt-0.5 pr-[21px] pl-[10px]">
        <div className="flex items-center gap-[3px] text-[12px] text-[#999]">
          <LogoIcon />
          <h1>PlanningPME Atria - after-sales.pp - Admin</h1>
        </div>
        <div className="flex gap-[35px]">
          <button type="button" aria-label="最小化">
            <svg viewBox="0 0 11 11" width="11" height="11"><path d="M0 5.500h11" stroke="#111" /></svg>
          </button>
          <button type="button" aria-label="元に戻す">
            <svg viewBox="0 0 11 11" width="11" height="11">
              <path d="M.5 2.500h8v8h-8zM2.500 2.500v-2h8v8h-2" fill="none" stroke="#111" />
            </svg>
          </button>
          <button type="button" aria-label="閉じる">
            <svg viewBox="0 0 11 11" width="11" height="11"><path d="M.5.500l10 10M10.500.500l-10 10" stroke="#111" /></svg>
          </button>
        </div>
      </header>
      <nav className="grid h-[22px] grid-cols-[56px_44px_44px_49px_50px_64px_auto] items-center pl-[18px] text-left text-[#333]">
        {MENUS.map((m) => (
          <button key={m.text} type="button" className={`text-left ${m.size}`}>{m.text}</button>
        ))}
      </nav>
      <div className="pt-[7px] pb-[5px]">
        <Toolbar />
      </div>
      <div className="flex pr-[9px] pl-[9px]">
        <LeftDock />
        <div className="mr-0.5 ml-px w-0.5 bg-[#d0d0d0]" />
        <Planner />
      </div>
      <PlannedDock />
      <footer className="mx-[9px] grid h-7 grid-cols-[1fr_auto_1fr] items-center border-b-2 border-[#c4c4c4] pb-1 text-[11px] text-black">
        <span>金曜日, 25 10月, 2024 から 10:00</span>
        <span>新機能：イベントは左クリック、アサイン不可はCTRLを押しながらクリック</span>
        <span className="text-right text-[12px]">作成 -作業量 : 25%</span>
      </footer>
    </div>
  );
}
